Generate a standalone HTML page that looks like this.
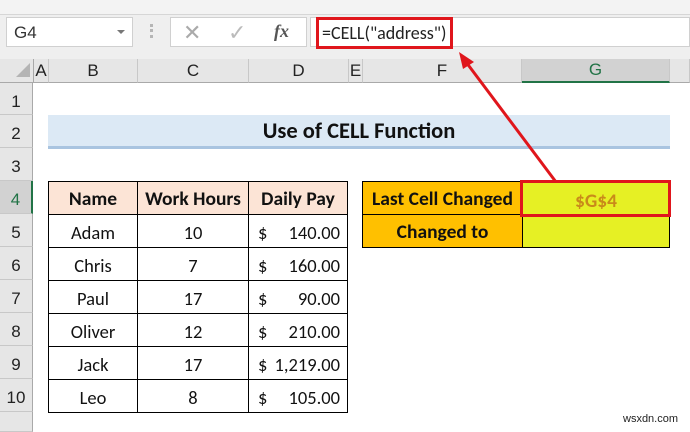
<!DOCTYPE html>
<html><head><meta charset="utf-8"><style>
*{margin:0;padding:0;box-sizing:border-box}
body{width:690px;height:429px;overflow:hidden;background:#fff;font-family:"Liberation Sans",sans-serif;position:relative}
.a{position:absolute}
.c{font-family:Carlito,"Liberation Sans",sans-serif;display:flex;align-items:center;justify-content:center}
.rh{position:absolute;left:0;width:33px;background:#e6e6e6;border-bottom:1px solid #c8c8c8;border-right:1px solid #a9a9a9;font-size:17px;color:#222;display:flex;align-items:center;justify-content:center;padding-top:6px}
.ch{position:absolute;top:59px;height:24px;background:#e6e6e6;border-right:1px solid #c8c8c8;border-bottom:1px solid #a9a9a9;font-size:17px;color:#222;display:flex;align-items:center;justify-content:center}
.t{position:absolute;border:1px solid #000;font-size:18.5px;color:#111;display:flex;align-items:center;justify-content:center;font-family:Carlito,'Liberation Sans',sans-serif;padding-top:2px}
.b{font-weight:bold;font-size:19.5px}
</style></head><body>
<div class="a" style="left:0;top:0;width:690px;height:15px;background:#f3f3f3;border-bottom:1px solid #d6d6d6"></div>
<div class="a" style="left:0;top:15px;width:690px;height:44px;background:#efefef"></div>
<div class="a" style="left:6px;top:17px;width:127px;height:30px;background:#fff;border:1px solid #d0d0d0;font-size:17px;color:#333;padding:5px 0 0 7px">G4</div>
<div class="a" style="left:117px;top:30px;width:0;height:0;border-left:4px solid transparent;border-right:4px solid transparent;border-top:4px solid #777"></div>
<div class="a" style="left:150px;top:24px;width:3px;height:14px;border-left:3px dotted #b5b5b5"></div>
<div class="a" style="left:170px;top:17px;width:137px;height:30px;background:#fff;border:1px solid #d0d0d0"></div>
<div class="a" style="left:183px;top:20px;font-size:22px;color:#aaa">✕</div>
<div class="a" style="left:228px;top:20px;font-size:22px;color:#bbb">✓</div>
<div class="a" style="left:274px;top:21px;font-size:18px;font-style:italic;font-family:'Liberation Serif',serif;color:#555;font-weight:bold">fx</div>
<div class="a" style="left:310px;top:17px;width:380px;height:30px;background:#fff;border:1px solid #d0d0d0"></div>
<div class="a" style="left:316px;top:17px;width:137px;height:32px;border:3px solid #e0161c"></div>
<div class="a" style="left:322px;top:22px;font-size:18px;color:#222;font-family:Carlito,'Liberation Sans',sans-serif">=CELL("address")</div>

<div class="a" style="left:0;top:59px;width:34px;height:24px;background:#e6e6e6;border-right:1px solid #a9a9a9;border-bottom:1px solid #a9a9a9"></div>
<div class="a" style="left:16px;top:63px;width:0;height:0;border-left:14px solid transparent;border-bottom:14px solid #b4b4b4"></div>
<div class="ch" style="left:34px;width:15px">A</div>
<div class="ch" style="left:49px;width:89px">B</div>
<div class="ch" style="left:138px;width:111px">C</div>
<div class="ch" style="left:249px;width:100px">D</div>
<div class="ch" style="left:349px;width:14px">E</div>
<div class="ch" style="left:363px;width:159px">F</div>
<div class="ch" style="left:522px;width:148px;background:#d2d2d2;border-bottom:2px solid #217346;color:#217346">G</div>
<div class="ch" style="left:670px;width:20px"></div>

<div class="rh" style="top:83px;height:32px">1</div>
<div class="rh" style="top:115px;height:33px">2</div>
<div class="rh" style="top:148px;height:33px">3</div>
<div class="rh" style="top:181px;height:33px;background:#d2d2d2;border-right:2px solid #217346;color:#217346">4</div>
<div class="rh" style="top:214px;height:33px">5</div>
<div class="rh" style="top:247px;height:33px">6</div>
<div class="rh" style="top:280px;height:33px">7</div>
<div class="rh" style="top:313px;height:33px">8</div>
<div class="rh" style="top:346px;height:33px">9</div>
<div class="rh" style="top:379px;height:33px">10</div>
<div class="rh" style="top:412px;height:20px"></div>

<div class="a c" style="left:48px;top:115px;width:622px;height:34px;background:#dce9f5;border-bottom:3px solid #a9c4e0;font-size:22.5px;font-weight:bold;color:#111;padding-top:2px">Use of CELL Function</div>

<div class="t b" style="left:48px;top:181px;width:90px;height:34px;background:#fce4d6">Name</div>
<div class="t b" style="left:137px;top:181px;width:112px;height:34px;background:#fce4d6">Work Hours</div>
<div class="t b" style="left:248px;top:181px;width:100px;height:34px;background:#fce4d6">Daily Pay</div>

<div id="rows"></div>
<script>
var d=[["Adam","10","140.00"],["Chris","7","160.00"],["Paul","17","90.00"],["Oliver","12","210.00"],["Jack","17","1,219.00"],["Leo","8","105.00"]];
var h="";d.forEach(function(r,i){var y=214+i*33;
h+='<div class="t" style="left:48px;top:'+y+'px;width:90px;height:34px">'+r[0]+'</div>';
h+='<div class="t" style="left:137px;top:'+y+'px;width:112px;height:34px">'+r[1]+'</div>';
h+='<div class="t" style="left:248px;top:'+y+'px;width:100px;height:34px;justify-content:space-between;padding:2px 7px 0 9px"><span>$</span><span>'+r[2]+'</span></div>';});
document.getElementById("rows").innerHTML=h;
</script>

<div class="t b" style="left:362px;top:181px;width:161px;height:34px;background:#ffc000">Last Cell Changed</div>
<div class="t b" style="left:522px;top:181px;width:148px;height:34px;background:#e6f024;color:#c98a1a;padding-top:5px">$G$4</div>
<div class="t b" style="left:362px;top:214px;width:161px;height:34px;background:#ffc000">Changed to</div>
<div class="t" style="left:522px;top:214px;width:148px;height:34px;background:#e6f024"></div>
<div class="a" style="left:520px;top:180px;width:151px;height:37px;border:3px solid #e0161c"></div>

<svg class="a" style="left:0;top:0" width="690" height="429">
<line x1="556" y1="182" x2="466" y2="62" stroke="#e0161c" stroke-width="3"/>
<polygon points="459,52 474,62 463,69" fill="#e0161c"/>
</svg>
<div class="a" style="left:623px;top:413px;font-size:11px;color:#222">wsxdn.com</div>
</body></html>
